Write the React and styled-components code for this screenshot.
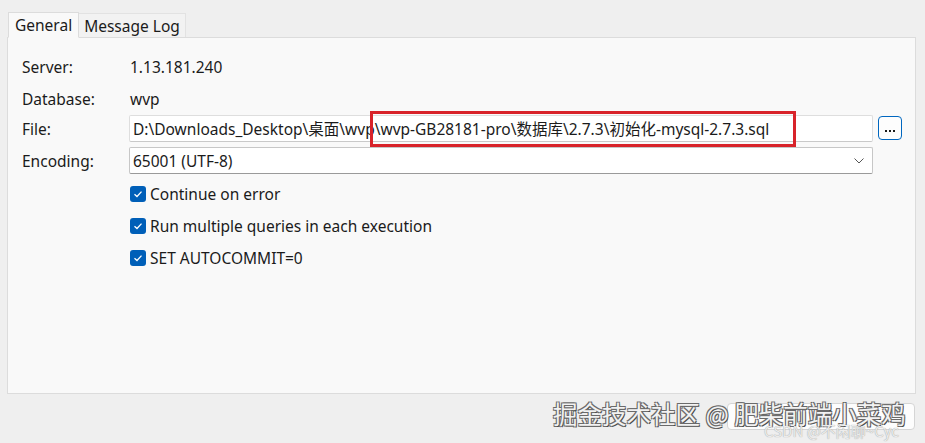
import React from "react";
import styled, { createGlobalStyle } from "styled-components";

const Global = createGlobalStyle`
  html, body { margin: 0; padding: 0; }
  body {
    width: 925px; height: 443px; overflow: hidden;
    background: #efefef;
    font-family: "Noto Sans", "Noto Sans CJK SC", sans-serif;
    color: #1b1b1b;
  }
`;

const Window = styled.div`
  position: relative;
  width: 925px;
  height: 443px;
  padding: 11px 9px 0 7px;
  box-sizing: border-box;
  display: flex;
  flex-direction: column;
`;

const Tabs = styled.div`
  display: flex;
  align-items: flex-end;
  height: 26px;
  padding-left: 1px;
  position: relative;
  z-index: 1;
`;

const Tab = styled.div`
  box-sizing: border-box;
  height: ${(p) => (p.$active ? "26px" : "24px")};
  padding: 0 ${(p) => (p.$active ? "6px" : "5px")};
  display: flex;
  align-items: center;
  font-size: 15.5px;
  background: ${(p) => (p.$active ? "#f9f9f9" : "#f2f2f2")};
  border: 1px solid ${(p) => (p.$active ? "#dcdcdc" : "#e2e2e2")};
  border-bottom: ${(p) => (p.$active ? "1px solid #f9f9f9" : "none")};
  margin-bottom: ${(p) => (p.$active ? "-1px" : "0")};
  ${(p) => (p.$active ? "" : "border-left: none;")}
`;

const Panel = styled.div`
  height: 357px;
  box-sizing: border-box;
  background: #f9f9f9;
  border: 1px solid #dcdcdc;
  padding: 13px 14px 0 14px;
`;

const Form = styled.div`
  display: grid;
  grid-template-columns: 107px 744px 29px;
  grid-template-rows: 32px 32px 32px 32px auto;
  align-items: start;
`;

const Label = styled.div`
  font-size: 15.5px;
  display: flex;
  align-items: center;
  height: ${(p) => p.$h || 32}px;
`;

const Value = styled.div`
  grid-column: 2 / 4;
  font-size: 15.5px;
  padding-left: 1px;
  height: 32px;
  display: flex;
  align-items: center;
`;

const FieldWrap = styled.div`
  position: relative;
  height: 27px;
  display: flex;
  align-items: center;
`;

const TextBox = styled.div`
  box-sizing: border-box;
  width: 744px;
  height: 27px;
  background: #fff;
  border: 1px solid #dedede;
  border-bottom-color: #c9c9c9;
  border-radius: 2px;
  font-size: 15.5px;
  padding: 0 3px;
  display: flex;
  align-items: center;
  white-space: nowrap;
  overflow: hidden;
`;

const Highlight = styled.div`
  position: absolute;
  left: 241px;
  top: -4px;
  width: 426px;
  height: 36px;
  box-sizing: border-box;
  border: 3px solid #d8232a;
  pointer-events: none;
`;

const SelectBox = styled(TextBox)`
  border-color: #c7c7c7;
  border-bottom-color: #9a9a9a;
  justify-content: space-between;
  padding-right: 8px;
`;

const BrowseButton = styled.div`
  box-sizing: border-box;
  width: 24px;
  height: 24px;
  margin: 1px 0 0 5px;
  border: 1px solid #0067c0;
  border-radius: 4px;
  background: #fdfdfd;
  display: flex;
  align-items: center;
  justify-content: center;
  gap: 2px;
  padding-top: 5px;
`;

const Dot = styled.span`
  width: 2px;
  height: 2px;
  background: #1b1b1b;
`;

const CheckGroup = styled.div`
  grid-column: 2 / 4;
  margin-top: -1px;
  display: flex;
  flex-direction: column;
`;

const CheckRow = styled.label`
  height: 32px;
  display: flex;
  align-items: center;
  gap: 4px;
  font-size: 15.5px;
  padding-left: 1px;
`;

const Box = styled.span`
  width: 16px;
  height: 16px;
  border-radius: 3px;
  background: #005fb8;
  display: inline-flex;
  align-items: center;
  justify-content: center;
`;

const Watermark = styled.div`
  position: absolute;
  left: 553px;
  top: 396px;
  font-family: "Noto Sans CJK SC", sans-serif;
  font-size: 24.5px;
  color: #f2f2f2;
  text-shadow: -1px -1px 0 #6a6a6a, 1px -1px 0 #6a6a6a, -1px 1px 0 #6a6a6a, 1px 1px 0 #4a4a4a;
  white-space: nowrap;
  z-index: 3;
`;

const HiddenButton = styled.div`
  position: absolute;
  left: 727px;
  top: 403px;
  width: 188px;
  height: 27px;
  box-sizing: border-box;
  background: #fdfdfd;
  border: 1px solid #d5d5d5;
  border-radius: 4px;
  z-index: 2;
`;

const Credit = styled.div`
  position: absolute;
  left: 764px;
  top: 421px;
  font-family: "Noto Sans CJK SC", sans-serif;
  font-size: 15px;
  line-height: 19px;
  color: #ececec;
  text-shadow: 0 0 1px #8a8a8a;
  white-space: nowrap;
  z-index: 4;
`;

const Check = () => (
  <Box>
    <svg width="10" height="10" viewBox="0 0 10 10">
      <path d="M1.5 5.2 L4 7.5 L8.5 2.6" fill="none" stroke="#fff" strokeWidth="1.3" />
    </svg>
  </Box>
);

export default function App() {
  return (
    <>
      <Global />
      <Window>
        <Tabs>
          <Tab $active>General</Tab>
          <Tab>Message Log</Tab>
        </Tabs>
        <Panel>
          <Form>
            <Label>Server:</Label>
            <Value>1.13.181.240</Value>
            <Label>Database:</Label>
            <Value>wvp</Value>
            <Label $h={27}>File:</Label>
            <FieldWrap>
              <TextBox>D:\Downloads_Desktop\桌面\wvp\wvp-GB28181-pro\数据库\2.7.3\初始化-mysql-2.7.3.sql</TextBox>
              <Highlight />
            </FieldWrap>
            <BrowseButton><Dot /><Dot /><Dot /></BrowseButton>
            <Label $h={27}>Encoding:</Label>
            <FieldWrap>
              <SelectBox>
                <span>65001 (UTF-8)</span>
                <svg width="10" height="6" viewBox="0 0 10 6">
                  <path d="M0.5 0.5 L5 5 L9.5 0.5" fill="none" stroke="#555" strokeWidth="1" />
                </svg>
              </SelectBox>
            </FieldWrap>
            <span />
            <CheckGroup>
              <CheckRow><Check />Continue on error</CheckRow>
              <CheckRow><Check />Run multiple queries in each execution</CheckRow>
              <CheckRow><Check />SET AUTOCOMMIT=0</CheckRow>
            </CheckGroup>
          </Form>
        </Panel>
        <HiddenButton />
        <Watermark>掘金技术社区 @ 肥柴前端小菜鸡</Watermark>
        <Credit>CSDN @不闲聊~Cyc</Credit>
      </Window>
    </>
  );
}
